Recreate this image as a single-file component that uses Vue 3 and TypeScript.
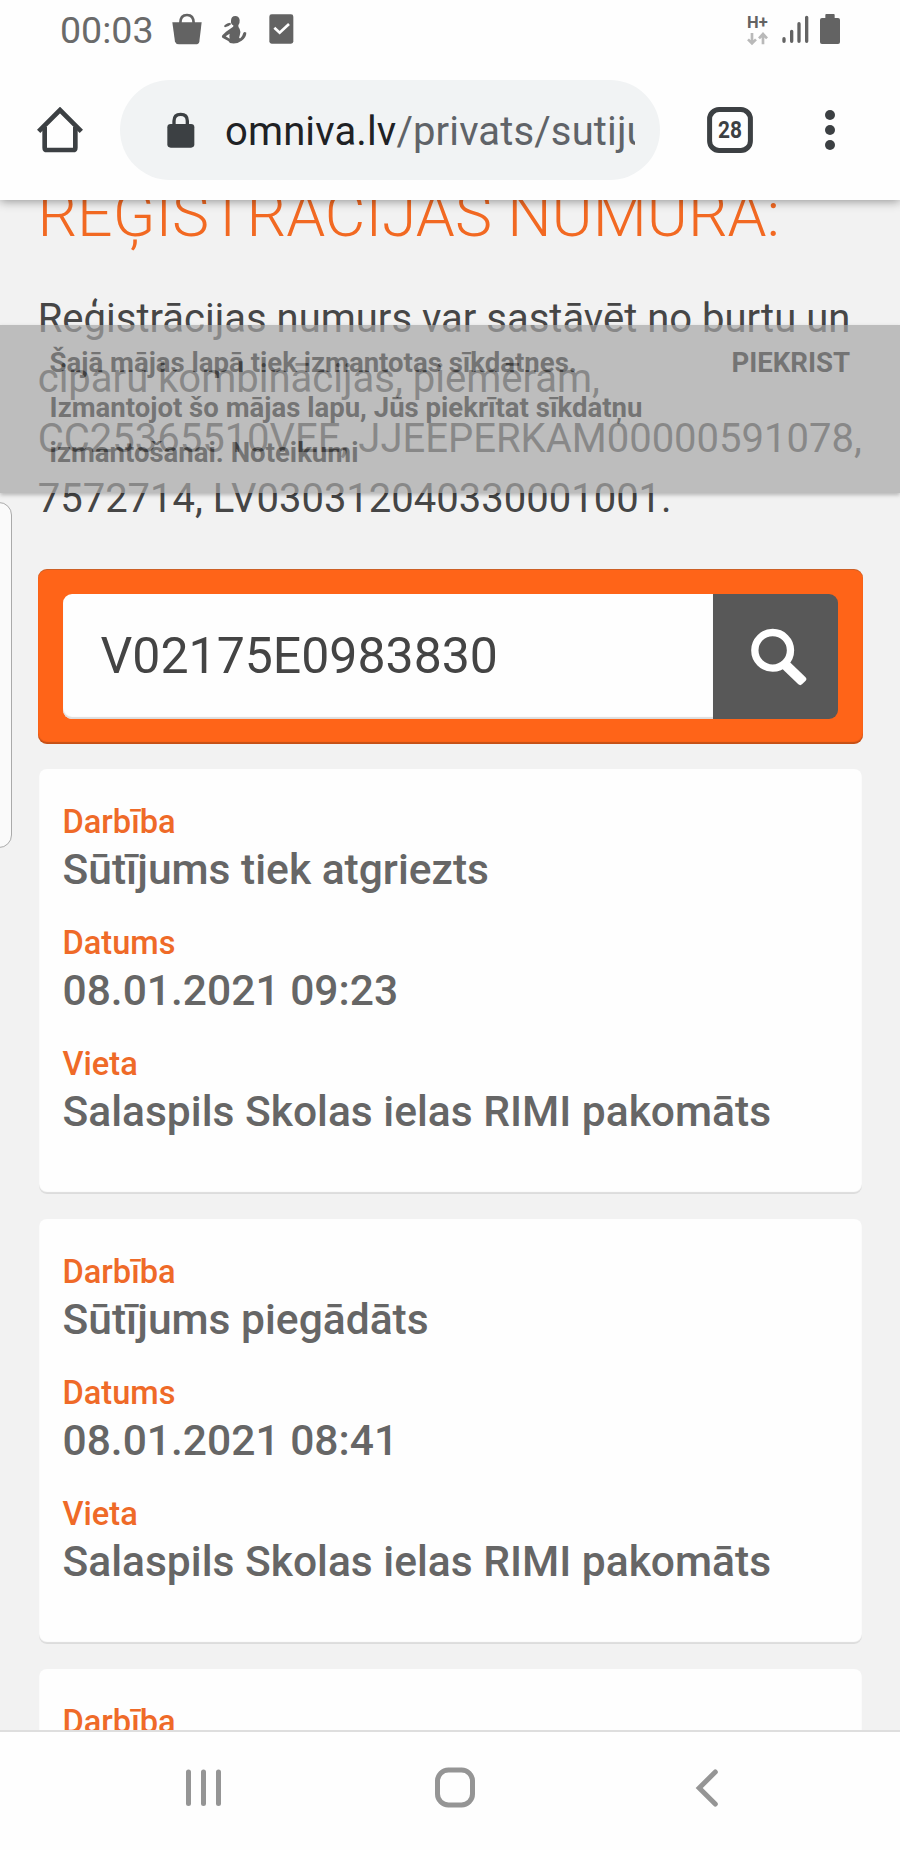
<script setup lang="ts">
interface Field {
  label: string
  value: string
}

const notice: string[] = [
  'Šajā mājas lapā tiek izmantotas sīkdatnes.',
  'Izmantojot šo mājas lapu, Jūs piekrītat sīkdatņu',
  'izmantošanai. Noteikumi',
]

const paragraph: string[] = [
  'Reģistrācijas numurs var sastāvēt no burtu un',
  'ciparu kombinācijas, piemēram,',
  'CC25365510VEE, JJEEPERKAM00000591078,',
  '7572714, LV030312040330001001.',
]

const event = (action: string, date: string): Field[] => [
  { label: 'Darbība', value: action },
  { label: 'Datums', value: date },
  { label: 'Vieta', value: 'Salaspils Skolas ielas RIMI pakomāts' },
]

const events: Field[][] = [
  event('Sūtījums tiek atgriezts', '08.01.2021 09:23'),
  event('Sūtījums piegādāts', '08.01.2021 08:41'),
]
</script>

<template>
  <div class="phone">
    <header class="chrome">
      <div class="status">
        <span class="time">00:03</span>
        <svg class="bag" width="30" height="32" viewBox="0 0 90 96" fill="#636363">
          <path d="M1 28H89L82 86Q80 94 71 94H21Q12 94 9 86Z" />
          <path d="M25 30C25 14 32 6 45 6S65 14 65 30" fill="none" stroke="#636363" stroke-width="8" />
        </svg>
        <svg class="figure" width="26" height="30" viewBox="0 0 78 90">
          <path
            d="M30 18Q30 3 43 3Q54 3 56 15Q57 24 52 31Q51 36 56 42Q61 52 56 62Q52 70 58 70Q64 65 67 54Q70 48 76 53Q76 67 62 77Q46 89 27 84L22 78L4 68Q1 65 4 61L15 50L31 39Q39 36 37 31Q29 28 30 18Z"
            fill="#636363"
          />
          <path d="M9 34Q11 26 28 23L30 28Q22 36 12 37Z" fill="#636363" />
          <path d="M14 64L26 56Q24 63 26 71Z" fill="#fefefe" />
        </svg>
        <svg class="check" width="25" height="30" viewBox="0 0 75 90">
          <rect x="1" y="1" width="72" height="88" rx="7" fill="#636363" />
          <path d="M16 41L32 56L60 30" fill="none" stroke="#fff" stroke-width="8" />
        </svg>
        <svg class="network" width="22" height="34" viewBox="0 0 66 102">
          <text x="0" y="41" class="hplus" textLength="62" lengthAdjust="spacingAndGlyphs">H+</text>
          <g fill="none" stroke="#b9b9b9" stroke-width="8">
            <path d="M15 57V87M3 76L15 88L27 76" />
            <path d="M48 91V61M36 73L48 60L60 73" />
          </g>
        </svg>
        <svg class="signal" width="28" height="29" viewBox="0 0 84 87" stroke="#636363" stroke-width="10" stroke-linecap="round">
          <path d="M6 71V79M29 49V79M51 26V79M74 7V79" />
        </svg>
        <svg class="battery" width="20" height="30" viewBox="0 0 60 90" fill="#636363">
          <rect x="16" y="0" width="28" height="18" rx="3" />
          <rect x="0" y="12" width="60" height="78" rx="6" />
        </svg>
      </div>

      <div class="toolbar">
        <svg class="home" width="46" height="46" viewBox="0 0 138 138" fill="none" stroke="#3c4043" stroke-width="14">
          <path d="M5 73L69 9L133 73" />
          <path d="M23 60V122Q23 129 30 129H108Q115 129 115 122V60" />
        </svg>
        <div class="omnibox">
          <svg class="lock" width="28" height="36" viewBox="0 0 84 108">
            <rect x="1" y="36" width="81" height="71" rx="10" fill="#3c4043" />
            <path d="M21 38V27Q21 7 41 7T61 27V38" fill="none" stroke="#3c4043" stroke-width="10" />
          </svg>
          <div class="url">omniva.lv<span class="path">/privats/sutijumu</span></div>
        </div>
        <svg class="tabs" width="46" height="46" viewBox="0 0 46 46">
          <rect x="2.6" y="2.6" width="40.8" height="40.8" rx="9.5" fill="none" stroke="#3c4043" stroke-width="5" />
          <text x="11" y="31" class="count" textLength="24" lengthAdjust="spacingAndGlyphs">28</text>
        </svg>
        <svg class="menu" width="10" height="42" viewBox="0 0 10 42" fill="#3c4043">
          <circle cx="5" cy="6" r="5" />
          <circle cx="5" cy="21" r="5" />
          <circle cx="5" cy="36" r="5" />
        </svg>
      </div>
    </header>

    <main class="page">
      <h1>REĢISTRĀCIJAS NUMURA:</h1>
      <p class="intro"><span v-for="line in paragraph" :key="line">{{ line }}</span></p>

      <div class="search">
        <div class="field">V02175E0983830</div>
        <button class="go" type="button" aria-label="Meklēt">
          <svg width="58" height="60" viewBox="0 0 174 180">
            <circle cx="65" cy="67" r="53.5" fill="none" stroke="#fff" stroke-width="22" />
            <path
              d="M113 99L163 147Q169 153 164 158L153 169Q148 174 142 169L92 121Z"
              fill="#fff"
            />
          </svg>
        </button>
      </div>

      <article v-for="(fields, i) in events" :key="i" class="card">
        <div v-for="f in fields" :key="f.label" class="entry">
          <div class="label">{{ f.label }}</div>
          <div class="value">{{ f.value }}</div>
        </div>
      </article>
      <article class="card">
        <div class="label">Darbība</div>
      </article>

      <aside class="notice">
        <div class="message"><span v-for="line in notice" :key="line">{{ line }}</span></div>
        <div class="accept">PIEKRIST</div>
      </aside>
      <div class="handle"></div>
    </main>

    <nav class="navbar">
      <svg class="recents" width="37" height="40" viewBox="0 0 37 40" stroke="#959595" stroke-width="5" stroke-linecap="round">
        <path d="M3.5 4V35.5M18.5 4V35.5M33.5 4V35.5" />
      </svg>
      <svg class="square" width="40" height="41" viewBox="0 0 40 41">
        <rect x="2.5" y="3" width="35" height="35" rx="11" fill="none" stroke="#959595" stroke-width="5" />
      </svg>
      <svg class="back" width="24" height="40" viewBox="0 0 24 40">
        <path d="M20.3 4L4.2 20L20.3 36" fill="none" stroke="#959595" stroke-width="5" stroke-linecap="round" />
      </svg>
    </nav>
  </div>
</template>

<style>
body {
  margin: 0;
}
</style>

<style scoped>
.phone {
  width: 900px;
  height: 1850px;
  display: flex;
  flex-direction: column;
  overflow: hidden;
  background: #fefefe;
  font-family: Roboto, 'Liberation Sans', sans-serif;
}
svg {
  display: block;
  flex: none;
}
.chrome {
  position: relative;
  z-index: 2;
  flex: none;
  height: 200px;
  background: #fefefe;
  box-shadow: 0 1px 10px rgba(0, 0, 0, 0.42);
}
.status {
  display: flex;
  align-items: flex-start;
  height: 80px;
  padding: 0 60px;
  box-sizing: border-box;
}
.time {
  width: 112px;
  padding-top: 8px;
  font-size: 37.6px;
  line-height: 44px;
  color: #6a6a6a;
}
.bag { margin-top: 12.6px; }
.figure { margin: 14.6px 0 0 19.3px; }
.check { margin: 14.4px 0 0 21.7px; }
.network { margin: 14px 0 0 auto; }
.signal { margin: 15px 0 0 13px; }
.battery { margin: 14px 0 0 10.5px; }
.hplus {
  font: 700 48px Roboto, sans-serif;
  fill: #636363;
}
.toolbar {
  display: flex;
  align-items: center;
  height: 100px;
  padding-left: 37px;
}
.omnibox {
  display: flex;
  align-items: center;
  width: 540px;
  height: 100px;
  margin-left: 37px;
  padding: 0 25px 0 46.5px;
  box-sizing: border-box;
  border-radius: 50px;
  background: #f1f3f4;
}
.lock { margin-top: -1px; }
.url {
  flex: 1;
  margin-left: 30.5px;
  padding-top: 4px;
  overflow: hidden;
  white-space: nowrap;
  font-size: 40px;
  line-height: 60px;
  letter-spacing: 0.13px;
  color: #202124;
}
.path { color: #5f6368; }
.tabs { margin-left: 47px; }
.count {
  font: 700 24px Roboto, sans-serif;
  fill: #3c4043;
}
.menu { margin-left: 72px; }
.page {
  position: relative;
  z-index: 1;
  flex: none;
  height: 1530px;
  overflow: hidden;
  background: #f2f2f2;
}
h1 {
  margin: -23px 0 0 37.4px;
  font-size: 62.5px;
  font-weight: 300;
  line-height: 75px;
  white-space: nowrap;
  color: #f26922;
}
.intro {
  margin: 36.8px 0 0 37.7px;
  font-size: 40px;
  line-height: 60px;
  color: #464646;
}
.intro span,
.message span {
  display: block;
  white-space: nowrap;
}
.search {
  display: flex;
  margin: 40.2px 37.5px 25px;
  padding: 25px;
  border-radius: 9px;
  background: #ff6418;
  box-shadow: inset 0 -2px 1px rgba(110, 50, 20, 0.4), inset 0 1px 0 rgba(130, 90, 60, 0.4);
}
.field {
  flex: 1;
  height: 125px;
  padding-left: 38px;
  border-radius: 9px 0 0 9px;
  background: #fefefe;
  box-shadow: inset 0 -2px 1px #ddd;
  font-size: 50px;
  line-height: 125px;
  color: #444;
}
.go {
  display: flex;
  width: 125px;
  height: 125px;
  margin: 0;
  padding: 34px 0 0 38px;
  box-sizing: border-box;
  border: 0;
  border-radius: 0 9px 9px 0;
  background: #585858;
}
.card {
  height: 425px;
  margin: 0 38.5px 25px;
  padding: 33px 0 0 24px;
  box-sizing: border-box;
  border-radius: 8px;
  background: #fefefe;
  box-shadow: inset 0 -2px 1px #dcdcdc;
}
.entry { margin-bottom: 25px; }
.label {
  font-size: 32.6px;
  font-weight: 500;
  line-height: 41px;
  color: #ef6a28;
}
.value {
  margin-top: -1px;
  padding-bottom: 1px;
  font-size: 42.55px;
  font-weight: 500;
  line-height: 55px;
  white-space: nowrap;
  color: #666;
}
.notice {
  position: absolute;
  top: 125px;
  left: 0;
  display: flex;
  justify-content: space-between;
  width: 900px;
  height: 168px;
  padding: 15px 50px 0 49.6px;
  box-sizing: border-box;
  background: #a6a6a6;
  opacity: 0.695;
  box-shadow: 0 2px 4px rgba(0, 0, 0, 0.35);
  font-size: 27.55px;
  font-weight: 700;
  line-height: 45px;
  color: #3e3e3e;
}
.handle {
  position: absolute;
  top: 302px;
  left: -21px;
  width: 31px;
  height: 344px;
  border: 1px solid #aaa;
  border-radius: 13px;
  background: #fafafa;
}
.navbar {
  position: relative;
  z-index: 2;
  display: flex;
  align-items: flex-start;
  flex: none;
  height: 120px;
  padding: 35px 0 0 185px;
  box-sizing: border-box;
  border-top: 2px solid #dedede;
  background: #fefefe;
}
.recents { margin-top: 1px; }
.square { margin-left: 213px; }
.back { margin: 0.5px 0 0 220px; }
</style>
